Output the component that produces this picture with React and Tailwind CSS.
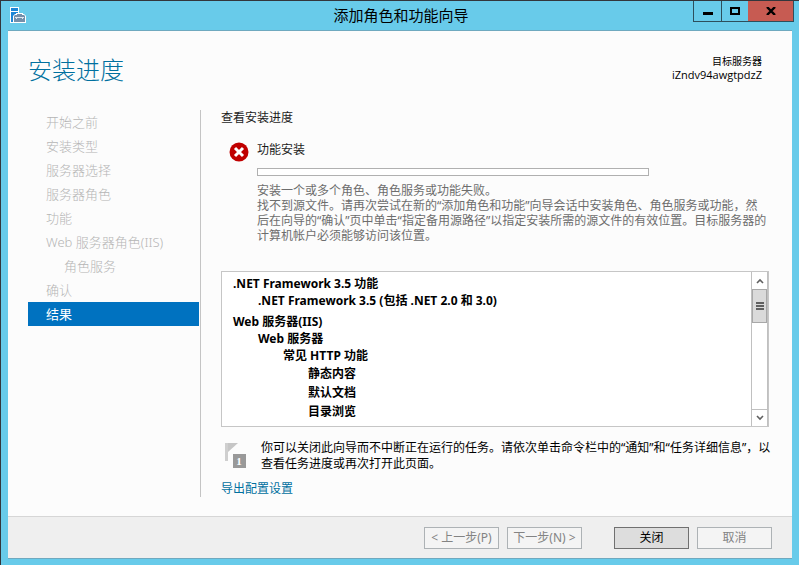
const steps = [
  { label: '开始之前' },
  { label: '安装类型' },
  { label: '服务器选择' },
  { label: '服务器角色' },
  { label: '功能' },
  { label: 'Web 服务器角色(IIS)' },
  { label: '角色服务', nested: true },
  { label: '确认' },
  { label: '结果', current: true },
];

const features = [
  { label: '.NET Framework 3.5 功能', style: 'h-[17px]' },
  { label: '.NET Framework 3.5 (包括 .NET 2.0 和 3.0)', style: 'h-[17px] pl-[25px]' },
  { label: 'Web 服务器(IIS)', style: 'mt-1 h-[17px]' },
  { label: 'Web 服务器', style: 'h-[17px] pl-[25px]' },
  { label: '常见 HTTP 功能', style: 'h-[18px] pl-[50px]' },
  { label: '静态内容', style: 'h-[19px] pl-[75px]' },
  { label: '默认文档', style: 'h-[19px] pl-[75px]' },
  { label: '目录浏览', style: 'h-[19px] pl-[75px]' },
];

function ServerIcon() {
  return (
    <svg width="16" height="16" viewBox="0 0 16 16" aria-hidden="true">
      <path d="M0 0h9v16H0z" fill="#fff" />
      <path d="M1 1h7v3H1zM1 5h7v10H1z" fill="#1c86d6" />
      <path d="M3 9l2-2h1V6h7v1h1l2 2v7H3z" fill="#fff" />
      <path d="M4 9l1-1h9l1 1v6H4z" fill="#7490ab" />
      <path d="M7 7h5v1H7z" fill="#7490ab" />
      <path d="M5 10h9v1H5zM6 11h1v1H6zM12 11h1v1h-1z" fill="#dfe8f0" />
    </svg>
  );
}

function ErrorIcon() {
  return (
    <svg width="20" height="20" viewBox="0 0 20 20" className="shrink-0" aria-hidden="true">
      <circle cx="10" cy="10" r="9.5" fill="#c00000" />
      <path d="M6 6l8 8M14 6l-8 8" stroke="#fff" strokeWidth="3" />
    </svg>
  );
}

function FlagIcon() {
  return (
    <svg width="22" height="26" viewBox="0 0 22 26" className="shrink-0" aria-hidden="true">
      <path d="M0 1h3v18H0z" fill="#cfcfcf" />
      <path d="M3 1h10L3 10z" fill="#c6c6c6" />
      <path d="M8 12h13v14H8z" fill="#999" />
      <text x="14" y="23" textAnchor="middle" fill="#fff" className="font-['Liberation_Serif'] text-[11px] font-bold">1</text>
    </svg>
  );
}

function CommandButton({ children, disabled }) {
  return (
    <button
      type="button"
      disabled={disabled}
      className={
        'h-[22px] w-[75px] whitespace-nowrap border text-xs leading-5 ' +
        (disabled ? 'border-[#adb2b5] bg-[#f4f4f4] text-[#838383]' : 'border-[#707070] bg-[#dddddd] text-black')
      }
    >
      {children}
    </button>
  );
}

export default function App() {
  return (
    <div className="flex min-h-screen w-full flex-col border-l border-t border-[#33363c] bg-[#68cbea] pb-1.5 pl-[7px] font-['Noto_Sans','Noto_Sans_CJK_SC',sans-serif] text-xs text-black">
      <header className="grid h-[29px] grid-cols-[1fr_auto_1fr] items-start pr-[5px]">
        <div className="pl-0.5 pt-1.5">
          <ServerIcon />
        </div>
        <h1 className="text-[15px] leading-7">添加角色和功能向导</h1>
        <div className="flex h-[21px] justify-self-end border-x border-b border-[#2d4f5c]">
          <button type="button" aria-label="最小化" className="flex w-7 items-center justify-center border-r border-[#2d4f5c]">
            <svg width="10" height="12" viewBox="0 0 10 12"><path d="M0 7h10v3H0z" /></svg>
          </button>
          <button type="button" aria-label="最大化" className="flex w-[26px] items-center justify-center">
            <svg width="10" height="8" viewBox="0 0 10 8"><path d="M1 1h8v6H1z" fill="none" stroke="#000" strokeWidth="2" /></svg>
          </button>
          <button type="button" aria-label="关闭窗口" className="flex w-[45px] items-center justify-center bg-[#c75b52]">
            <svg width="10" height="8" viewBox="0 0 10 8"><path d="M1 0l8 8M9 0L1 8" stroke="#000" strokeWidth="2.4" /></svg>
          </button>
        </div>
      </header>

      <div className="mr-[7px] flex grow flex-col border-b border-t border-[#6fa9bf] bg-[#fcfcfc]">
        <div className="flex h-[79px] items-start justify-between pl-5 pr-[30px]">
          <h2 className="pt-[21px] text-2xl font-light leading-9 text-[#00709f]">安装进度</h2>
          <div className="pt-6 text-right leading-[13px]">
            <p className="text-[10px]">目标服务器</p>
            <p className="font-['Open_Sans',sans-serif] text-[11px]">iZndv94awgtpdzZ</p>
          </div>
        </div>

        <div className="flex grow pb-[19px] pl-5">
          <nav className="w-[173px] shrink-0 border-r border-[#c4c4c4] pr-px">
            <ol>
              {steps.map((s) => (
                <li
                  key={s.label}
                  aria-current={s.current ? 'step' : undefined}
                  className={
                    'h-6 text-[13px] leading-6 ' +
                    (s.current ? 'bg-[#0072c0] pl-[18px] text-white' : s.nested ? 'pl-9 font-light text-[#b5b5b5]' : 'pl-[18px] font-light text-[#b5b5b5]')
                  }
                >
                  {s.label}
                </li>
              ))}
            </ol>
          </nav>

          <main className="ml-5 mr-[23px] min-w-0 grow">
            <h3 className="leading-4 text-[#1c1c1c]">查看安装进度</h3>

            <section className="mt-4 flex gap-2 pl-2">
              <ErrorIcon />
              <div className="min-w-0 grow">
                <p id="task" className="leading-4 text-[#1c1c1c]">功能安装</p>
                <div role="progressbar" aria-labelledby="task" className="mt-2.5 h-2 max-w-[392px] border border-[#b0b0b0] bg-white" />
                <p className="mt-[7px] whitespace-nowrap leading-[15px] text-[#6d6d6d]">
                  安装一个或多个角色、角色服务或功能失败。
                  <br />
                  找不到源文件。请再次尝试在新的“添加角色和功能”向导会话中安装角色、角色服务或功能，然
                  <br />
                  后在向导的“确认”页中单击“指定备用源路径”以指定安装所需的源文件的有效位置。目标服务器的
                  <br />
                  计算机帐户必须能够访问该位置。
                </p>
              </div>
            </section>

            <div className="mt-7 flex h-[156px] border border-[#c6c6c6] bg-white">
              <ul className="grow overflow-hidden pl-[11px] pt-[3px] font-bold leading-[17px]">
                {features.map((f) => (
                  <li key={f.label} className={f.style}>{f.label}</li>
                ))}
              </ul>
              <div className="flex w-[17px] shrink-0 flex-col border-l border-r border-[#c0c0c0]">
                <button type="button" aria-label="向上滚动" className="flex h-[17px] items-center justify-center">
                  <svg width="8" height="6" viewBox="0 0 8 6"><path d="M1 5l3-3 3 3" fill="none" stroke="#606060" strokeWidth="1.6" /></svg>
                </button>
                <div className="flex h-[34px] items-center justify-center border border-[#a8a8a8] bg-[#dadada]">
                  <svg width="8" height="9" viewBox="0 0 8 9"><path d="M0 0h8v2H0zM0 3h8v2H0zM0 6h8v2H0z" fill="#606060" /></svg>
                </div>
                <button type="button" aria-label="向下滚动" className="mt-auto flex h-[17px] items-center justify-center border-t border-[#c0c0c0]">
                  <svg width="8" height="6" viewBox="0 0 8 6"><path d="M1 1l3 3 3-3" fill="none" stroke="#606060" strokeWidth="1.6" /></svg>
                </button>
              </div>
            </div>

            <div className="mt-[13px] flex gap-3.5 pl-1">
              <div className="pt-0.5"><FlagIcon /></div>
              <p className="whitespace-nowrap leading-4">
                你可以关闭此向导而不中断正在运行的任务。请依次单击命令栏中的“通知”和“任务详细信息”，以
                <br />
                查看任务进度或再次打开此页面。
              </p>
            </div>
            <a href="#export" className="mt-[9px] block w-fit leading-4 text-[#00709f]">导出配置设置</a>
          </main>
        </div>

        <footer className="flex h-[42px] shrink-0 items-center justify-end border-t border-[#d6d6d6] bg-[#efefef] pr-5">
          <div className="flex gap-2">
            <CommandButton disabled>&lt; 上一步(P)</CommandButton>
            <CommandButton disabled>下一步(N) &gt;</CommandButton>
          </div>
          <div className="ml-8 flex gap-2">
            <CommandButton>关闭</CommandButton>
            <CommandButton disabled>取消</CommandButton>
          </div>
        </footer>
      </div>
    </div>
  );
}
